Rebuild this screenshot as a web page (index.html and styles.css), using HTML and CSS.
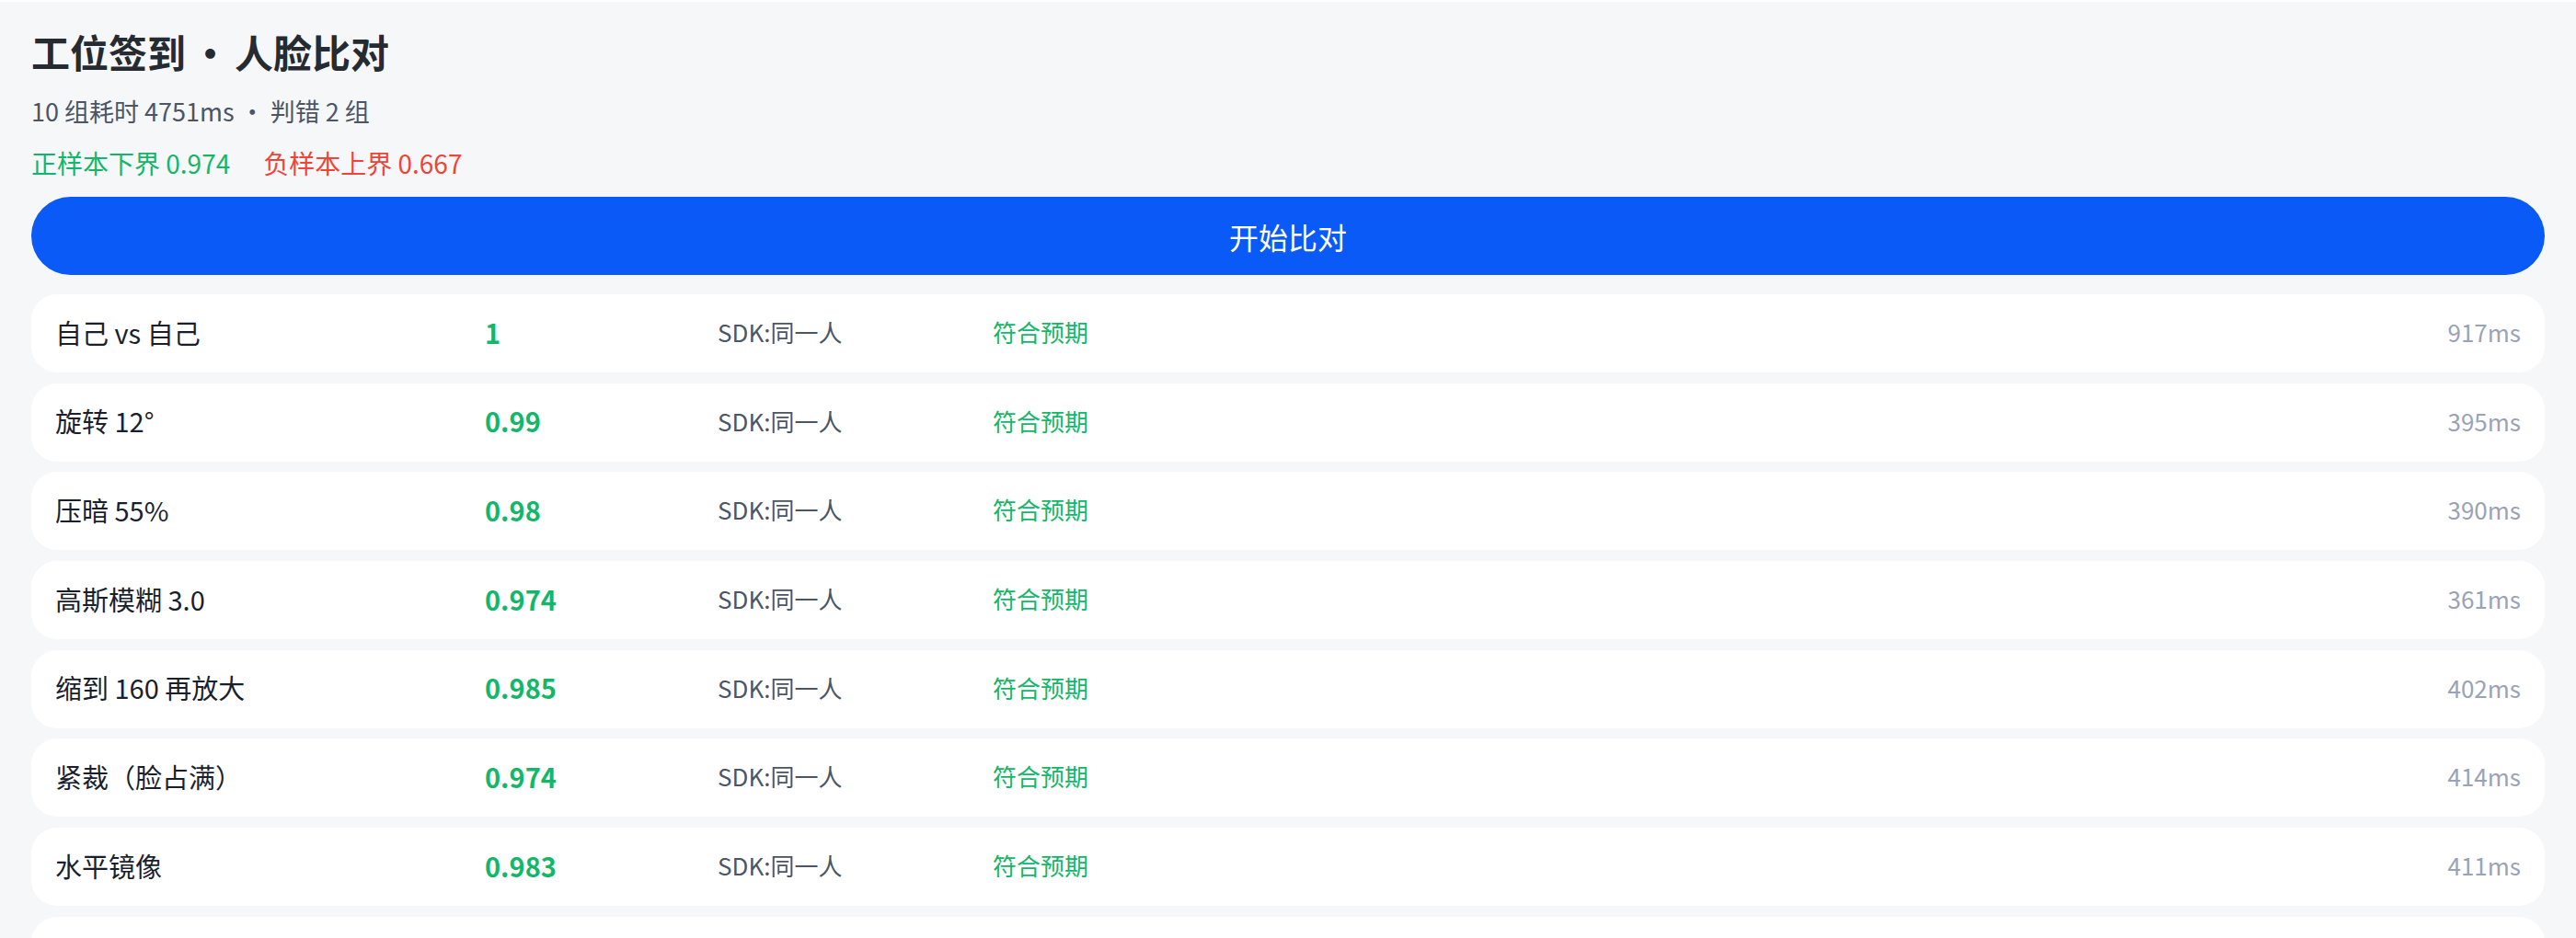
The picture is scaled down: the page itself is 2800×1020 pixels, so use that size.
FILE: index.html
```html
<!DOCTYPE html>
<html lang="zh-CN">
<head>
  <meta charset="UTF-8">
  <meta name="viewport" content="width=device-width, initial-scale=1.0">
  <title>工位签到 · 人脸比对</title>
  <link rel="stylesheet" href="styles.css">
</head>
<body>
  <div class="page">
    <!-- Header -->
    <h1 class="title">工位签到 · 人脸比对</h1>
    <div class="summary">10 组耗时 4751ms · 判错 2 组</div>
    <div class="bounds">
      <span class="pos">正样本下界 0.974</span>
      <span class="neg">负样本上界 0.667</span>
    </div>

    <button class="start-btn">开始比对</button>

    <!-- Results -->
    <div class="results">
      <div class="row">
        <div class="name">自己 vs 自己</div>
        <div class="score">1</div>
        <div class="sdk">SDK:同一人</div>
        <div class="verdict">符合预期</div>
        <div class="cost">917ms</div>
      </div>
      <div class="row">
        <div class="name">旋转 12°</div>
        <div class="score">0.99</div>
        <div class="sdk">SDK:同一人</div>
        <div class="verdict">符合预期</div>
        <div class="cost">395ms</div>
      </div>
      <div class="row">
        <div class="name">压暗 55%</div>
        <div class="score">0.98</div>
        <div class="sdk">SDK:同一人</div>
        <div class="verdict">符合预期</div>
        <div class="cost">390ms</div>
      </div>
      <div class="row">
        <div class="name">高斯模糊 3.0</div>
        <div class="score">0.974</div>
        <div class="sdk">SDK:同一人</div>
        <div class="verdict">符合预期</div>
        <div class="cost">361ms</div>
      </div>
      <div class="row">
        <div class="name">缩到 160 再放大</div>
        <div class="score">0.985</div>
        <div class="sdk">SDK:同一人</div>
        <div class="verdict">符合预期</div>
        <div class="cost">402ms</div>
      </div>
      <div class="row">
        <div class="name">紧裁（脸占满）</div>
        <div class="score">0.974</div>
        <div class="sdk">SDK:同一人</div>
        <div class="verdict">符合预期</div>
        <div class="cost">414ms</div>
      </div>
      <div class="row">
        <div class="name">水平镜像</div>
        <div class="score">0.983</div>
        <div class="sdk">SDK:同一人</div>
        <div class="verdict">符合预期</div>
        <div class="cost">411ms</div>
      </div>
      <!-- next row is below the fold -->
      <div class="row"></div>
    </div>
  </div>
</body>
</html>
```

FILE: styles.css
```css
html, body {
  margin: 0;
  padding: 0;
  height: 100%;
}

* {
  box-sizing: border-box;
}

body {
  font-family: "Noto Sans CJK SC", "Noto Sans", sans-serif;
  background-color: #f6f7f9;
  border-top: 2px solid #fff;
  color: #1d2433;
  overflow: hidden;
}

.page {
  padding: 0 34px;
}

/* Header */
.title {
  margin: 0;
  padding-top: 29px;
  font-size: 42px;
  line-height: 50px;
  font-weight: 700;
  color: #262a31;
  word-spacing: -4px;
}

.summary {
  margin-top: 22px;
  font-size: 27px;
  line-height: 36px;
  color: #4b5565;
}

.bounds {
  margin-top: 20px;
  font-size: 28px;
  line-height: 36px;
  display: flex;
  gap: 36px;
}
.bounds .pos {
  color: #12b76a;
}
.bounds .neg {
  color: #f04438;
}

.start-btn {
  display: block;
  width: 100%;
  height: 85px;
  margin-top: 19px;
  border: none;
  border-radius: 43px;
  background-color: #0a5af7;
  color: #fff;
  font-family: inherit;
  font-size: 32px;
  cursor: pointer;
}

/* Result rows */
.results {
  margin-top: 21px;
  display: flex;
  flex-direction: column;
  gap: 11.7px;
}

.row {
  display: grid;
  grid-template-columns: 467px 253px 299px 1fr auto;
  align-items: center;
  height: 85px;
  padding: 0 26px 4px;
  background-color: #fff;
  border-radius: 28px;
}

.name {
  font-size: 29px;
  color: #1a1f2e;
}
.score {
  font-size: 29px;
  font-weight: 700;
  color: #12b76a;
}
.sdk {
  font-size: 26px;
  color: #4b5565;
}
.verdict {
  font-size: 26px;
  color: #12b76a;
}
.cost {
  font-size: 26px;
  color: #9aa3b5;
}
```
